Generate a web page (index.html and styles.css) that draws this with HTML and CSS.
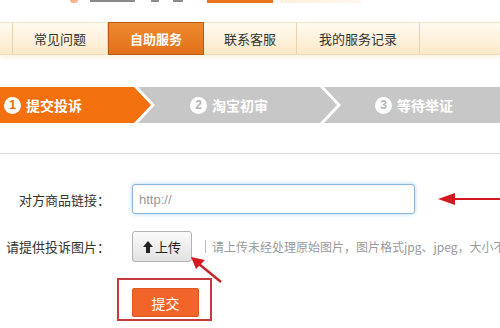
FILE: index.html
```html
<!DOCTYPE html>
<html lang="zh">
<head>
<meta charset="utf-8">
<link rel="stylesheet" href="styles.css">
</head>
<body>
<div class="page">
  <div class="top">
    <span class="top-dot"></span>
    <span class="top-txt t1"></span>
    <span class="top-txt t2"></span>
    <span class="top-txt t3"></span>
    <span class="top-btn"></span>
    <span class="top-tip"></span>
  </div>
  <nav class="nav">
    <span class="nav-lead"></span>
    <a class="tab t-faq">常见问题</a>
    <a class="tab t-self active">自助服务</a>
    <a class="tab t-cs">联系客服</a>
    <a class="tab t-rec">我的服务记录</a>
    <span class="nav-rest"></span>
  </nav>
  <div class="steps">
    <div class="step s1"><span class="num">1</span>提交投诉</div>
    <div class="step s2"><span class="num">2</span>淘宝初审</div>
    <div class="step s3"><span class="num">3</span>等待举证</div>
  </div>
  <div class="divider"></div>
  <div class="form">
    <label class="lbl">对方商品链接：</label>
    <div class="field"><input class="url" type="text" placeholder="http://"></div>
    <label class="lbl">请提供投诉图片：</label>
    <div class="field">
      <button class="upload" type="button"><svg class="up-ico" width="10" height="12" viewBox="0 0 10 12"><path d="M5 0 L10 6 L7 6 L7 12 L3 12 L3 6 L0 6 Z" fill="#222"/></svg>上传</button>
      <span class="hint">请上传未经处理原始图片，图片格式jpg、jpeg，大小不</span>
    </div>
  </div>
  <div class="submit-row">
    <div class="mark"><button class="submit" type="button">提交</button></div>
  </div>
  <svg class="arrow a1" width="64" height="14" viewBox="0 0 64 14"><path d="M16 7 H64" stroke="#d41920" stroke-width="2"/><path d="M0 7 L17 1 L17 13 Z" fill="#d41920"/></svg>
  <svg class="arrow a2" width="34" height="28" viewBox="0 0 34 28"><path d="M31 26 L9 8" stroke="#c4262b" stroke-width="2.5"/><path d="M1 1 L15 4 L6 13 Z" fill="#d41920"/></svg>
</div>
</body>
</html>
```
FILE: styles.css
```css
* { box-sizing: border-box; }
html, body { margin: 0; padding: 0; background: #fff; }
body { width: 500px; height: 328px; overflow: hidden; font-family: "Noto Sans CJK SC", "Noto Sans", sans-serif; color: #333; }
.page { position: relative; width: 500px; height: 328px; overflow: hidden; }

.top { height: 22px; display: flex; align-items: flex-start; }
.top-dot { width: 8px; height: 3px; margin-left: 70px; background: #f3b48a; border-radius: 0 0 4px 4px; }
.top-txt { height: 2px; background: #8a8a8a; }
.t1 { width: 45px; margin-left: 12px; }
.t2 { width: 8px; margin-left: 16px; }
.t3 { width: 10px; margin-left: 14px; }
.top-btn { width: 66px; height: 3px; margin-left: 24px; background: #e8731c; }
.top-tip { width: 80px; height: 3px; margin-left: 8px; background: linear-gradient(90deg, #fdf1dc, #fff8ee); }

.nav { height: 33px; display: flex; background: linear-gradient(#fffaf0, #fbe9c9); border-top: 1px solid #f3e6cf; border-bottom: 1px solid #f1dcb8; box-shadow: 0 3px 4px rgba(240, 220, 180, 0.35); }
.nav-lead { width: 13px; border-right: 1px solid #ead3ad; }
.tab { display: flex; align-items: center; justify-content: center; font-size: 13px; color: #333; border-right: 1px solid #ead3ad; text-decoration: none; }
.t-faq { width: 95px; }
.t-self { width: 96px; }
.t-cs { width: 93px; }
.t-rec { width: 123px; }
.tab.active { background: linear-gradient(#ee8a2e, #e2701a); color: #fff; font-weight: bold; border: 1px solid #b95a14; margin-top: -1px; margin-bottom: -1px; }
.nav-rest { flex: 1; }

.steps { display: flex; height: 36px; margin-top: 32px; }
.step { height: 36px; display: flex; align-items: center; font-size: 14px; font-weight: bold; color: #fff; }
.step .num { width: 17px; height: 17px; border-radius: 50%; background: #fff; display: inline-flex; align-items: center; justify-content: center; font-size: 12px; font-weight: bold; margin-right: 5px; font-family: "Liberation Sans", sans-serif; }
.s1 { width: 151px; background: #f3700f; padding-left: 4px; clip-path: polygon(0 0, calc(100% - 17px) 0, 100% 50%, calc(100% - 17px) 100%, 0 100%); }
.s1 .num { color: #e86a12; }
.s2 { width: 199px; margin-left: -13px; background: #c7c7c7; padding-left: 52px; clip-path: polygon(0 0, calc(100% - 17px) 0, 100% 50%, calc(100% - 17px) 100%, 0 100%, 17px 50%); }
.s3 { flex: 1; margin-left: -13px; background: #c7c7c7; padding-left: 51px; clip-path: polygon(0 0, 100% 0, 100% 100%, 0 100%, 17px 50%); }
.s2 .num, .s3 .num { color: #b5b5b5; }

.divider { height: 1px; background: #dcdcdc; margin-top: 30px; }

.form { display: grid; grid-template-columns: 110px 1fr; column-gap: 22px; row-gap: 17px; margin-top: 30px; align-items: center; }
.lbl { font-size: 13px; color: #333; text-align: right; white-space: nowrap; }
.field { display: flex; align-items: center; white-space: nowrap; }
.url { width: 283px; height: 30px; border: 1px solid #8fb6d8; border-radius: 3px; box-shadow: 0 0 4px rgba(120, 180, 225, 0.6), inset 0 1px 2px rgba(0,0,0,0.06); padding: 0 6px; font-size: 13px; font-family: "Liberation Sans", sans-serif; outline: none; }
.url::placeholder { color: #999; }
.upload { width: 60px; height: 31px; border: 1px solid #b3b3b3; border-radius: 3px; background: linear-gradient(#fafafa, #e2e2e2); font-size: 13px; font-family: "Noto Sans CJK SC", sans-serif; color: #222; display: flex; align-items: center; justify-content: center; gap: 2px; padding: 0; }
.up-ico { display: block; }
.hint { margin-left: 13px; border-left: 1px solid #bbb; padding-left: 6px; font-size: 12px; line-height: 13px; color: #9a9a9a; }

.submit-row { padding-left: 117px; margin-top: 16px; }
.mark { width: 95px; height: 43px; border: 2px solid #c63a3d; padding: 8px 0 0 13px; }
.submit { width: 67px; height: 29px; border: 1px solid #e0561c; border-radius: 2px; background: #f2652a; color: #fff; font-size: 14px; font-family: "Noto Sans CJK SC", sans-serif; padding: 0; }

.arrow { position: absolute; }
.a1 { left: 438px; top: 192px; }
.a2 { left: 190px; top: 256px; }
```
